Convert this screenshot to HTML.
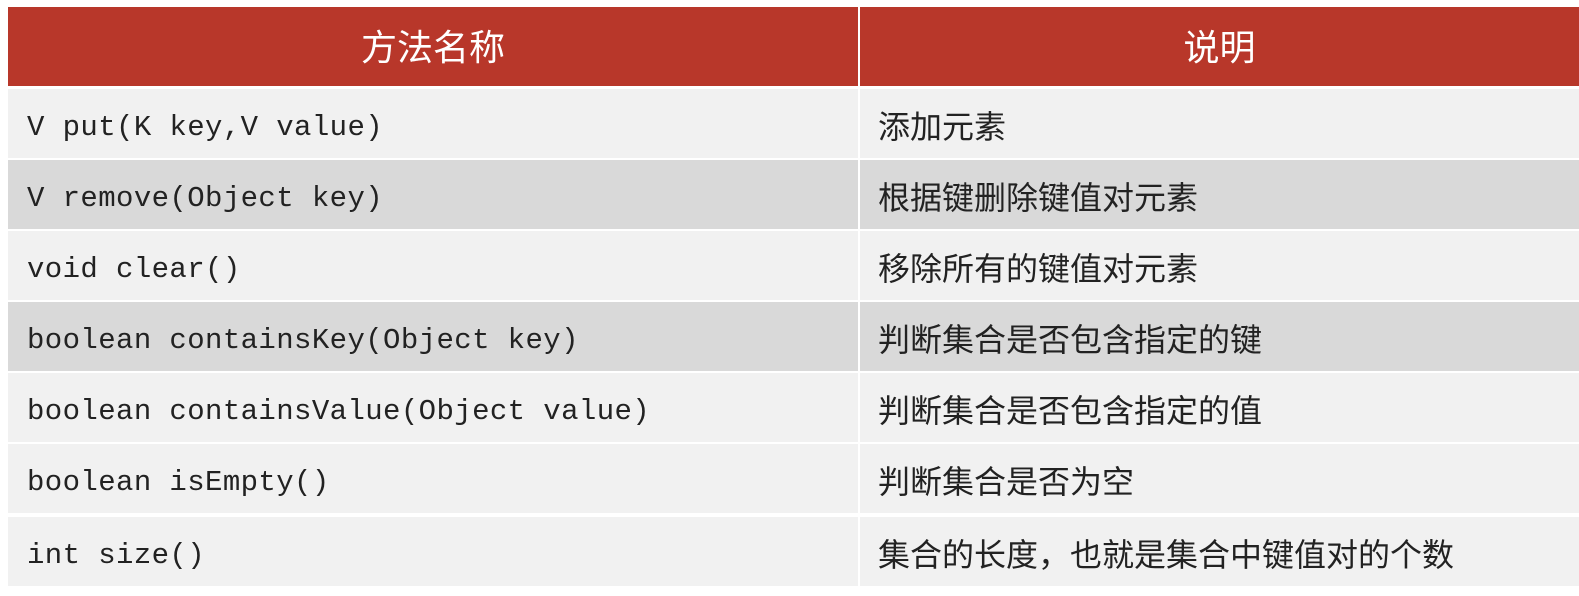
<!DOCTYPE html>
<html><head><meta charset="utf-8"><style>
body{margin:0;background:#fff;width:1579px;height:596px;overflow:hidden;position:relative}
.hdr{position:absolute;top:7px;height:79px;background:#b8372a;color:#fff;font-family:"Liberation Sans","Noto Sans CJK SC",sans-serif;font-size:36px;line-height:82px;text-align:center}
.row{position:absolute;left:8px;width:1571px;height:69px}
.c{position:absolute;top:4px;height:69px;line-height:69px;color:#222}
.m{left:19px;font-family:"Liberation Mono",monospace;font-size:29px;letter-spacing:0.4px}
.z{left:870px;font-family:"Liberation Sans","Noto Sans CJK SC",sans-serif;font-size:32px}
.vl{position:absolute;left:858px;top:0;width:2px;height:596px;background:#fff}
.a{background:#f1f1f1}.b{background:#d9d9d9}
</style></head><body>
<div class="hdr" style="left:8px;width:850px">方法名称</div>
<div class="hdr" style="left:860px;width:719px">说明</div>
<div class="row a" style="top:89px"><div class="c m">V put(K key,V value)</div><div class="c z">添加元素</div></div>
<div class="row b" style="top:160px"><div class="c m">V remove(Object key)</div><div class="c z">根据键删除键值对元素</div></div>
<div class="row a" style="top:231px"><div class="c m">void clear()</div><div class="c z">移除所有的键值对元素</div></div>
<div class="row b" style="top:302px"><div class="c m">boolean containsKey(Object key)</div><div class="c z">判断集合是否包含指定的键</div></div>
<div class="row a" style="top:373px"><div class="c m">boolean containsValue(Object value)</div><div class="c z">判断集合是否包含指定的值</div></div>
<div class="row a" style="top:444px"><div class="c m">boolean isEmpty()</div><div class="c z">判断集合是否为空</div></div>
<div class="row a" style="top:517px"><div class="c m">int size()</div><div class="c z">集合的长度，也就是集合中键值对的个数</div></div>
<div class="vl"></div>
</body></html>
